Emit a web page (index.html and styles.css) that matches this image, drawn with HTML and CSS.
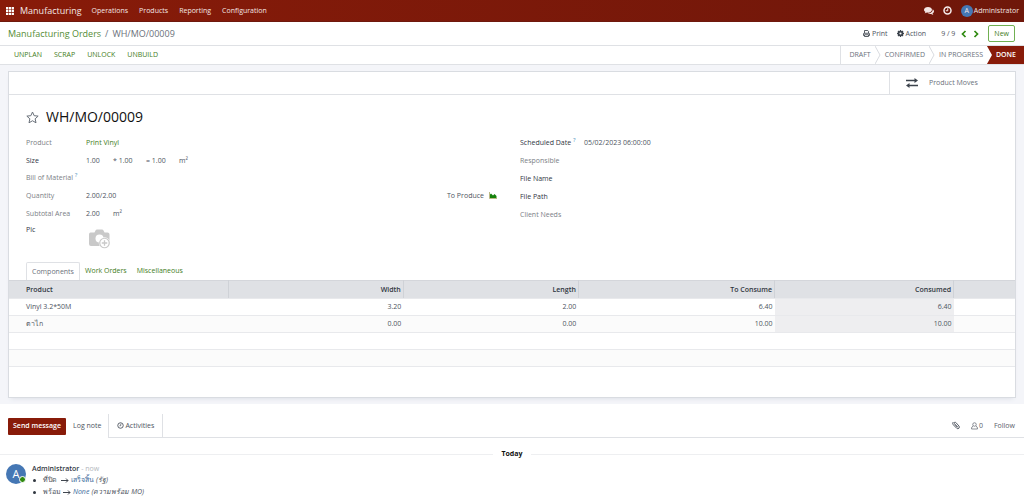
FILE: index.html
```html
<!DOCTYPE html>
<html lang="en">
<head>
<meta charset="utf-8">
<title>Manufacturing Orders / WH/MO/00009</title>
<link rel="stylesheet" href="styles.css">
</head>
<body>
<header class="navbar">
  <button class="apps" aria-label="Apps"><svg width="8" height="8" viewBox="0 0 16 16"><path fill="#fff" d="M0 0h4.500v4.500H0zM5.700 0h4.500v4.500H5.700zM11.400 0h4.500v4.500h-4.500zM0 5.700h4.500v4.500H0zM5.700 5.700h4.500v4.500H5.700zM11.400 5.700h4.500v4.500h-4.500zM0 11.400h4.500v4.500H0zM5.700 11.400h4.500v4.500H5.700zM11.400 11.400h4.500v4.500h-4.500z"/></svg></button>
  <a class="brand" href="#">Manufacturing</a>
  <nav class="menu">
    <a href="#">Operations</a><a href="#">Products</a><a href="#">Reporting</a><a href="#">Configuration</a>
  </nav>
  <div class="systray">
    <button aria-label="Messages"><svg width="10" height="8" viewBox="0 0 20 16"><path fill="#f3e6e4" d="M8 0c4.400 0 8 2.500 8 5.700s-3.600 5.700-8 5.700c-.8 0-1.500-.1-2.200-.2C4.700 12 3 12.600 1.200 12.700c.8-.8 1.500-1.600 1.700-2.600C1.100 9 0 7.500 0 5.700 0 2.500 3.600 0 8 0z"/><path fill="#f3e6e4" d="M17.300 4.300C19 5.300 20 6.800 20 8.400c0 1.800-1.100 3.300-2.900 4.300.2 1 .9 1.900 1.700 2.600-1.800-.1-3.500-.7-4.600-1.500-2.400.5-5 .1-6.900-1 6 .1 10.500-3.400 10-8.500z"/></svg></button>
    <button aria-label="Activities"><svg width="9" height="9" viewBox="0 0 18 18"><circle cx="9" cy="9" r="7" fill="none" stroke="#f8efee" stroke-width="3"/><path d="M9.500 4.500v5h-4" fill="none" stroke="#f8efee" stroke-width="2"/></svg></button>
    <button class="user"><span class="avatar-sm">A</span>Administrator</button>
  </div>
</header>

<div class="control">
  <div class="crumbs"><a href="#">Manufacturing Orders</a><span>/</span><span>WH/MO/00009</span></div>
  <div class="tools">
    <button class="tool"><svg width="7" height="7" viewBox="0 0 14 14"><path d="M3 6V1h6.500L11 2.500V6M1 11V7.500Q1 6.500 2 6.500h10q1 0 1 1V11h-2M3 11H1M3 9.500h8V13H3z" fill="none" stroke="#3c434c" stroke-width="1.700"/></svg>Print</button>
    <button class="tool"><svg width="7" height="7" viewBox="0 0 14 14"><circle cx="7" cy="7" r="3.800" fill="none" stroke="#3c434c" stroke-width="3.200"/><path d="M7 0v2.500M7 11.500V14M0 7h2.500M11.500 7H14M2 2l2 2M10 10l2 2M12 2l-2 2M4 10l-2 2" stroke="#3c434c" stroke-width="2.600"/></svg>Action</button>
    <span class="pager">9 / 9</span>
    <button class="arrow" aria-label="Previous"><svg width="6" height="8" viewBox="0 0 6 8"><path d="M4.500 1L1.500 4l3 3" fill="none" stroke="#2f8a0f" stroke-width="1.700"/></svg></button>
    <button class="arrow" aria-label="Next"><svg width="6" height="8" viewBox="0 0 6 8"><path d="M1.500 1l3 3-3 3" fill="none" stroke="#2f8a0f" stroke-width="1.700"/></svg></button>
    <button class="new">New</button>
  </div>
</div>

<div class="statusbar">
  <div class="actions"><button>UNPLAN</button><button>SCRAP</button><button>UNLOCK</button><button>UNBUILD</button></div>
  <div class="steps">
    <button>DRAFT</button>
    <svg class="chev" width="6" height="18" viewBox="0 0 6 18"><path d="M0 0l5 9-5 9" fill="none" stroke="#d9dce0"/></svg>
    <button>CONFIRMED</button>
    <svg class="chev" width="6" height="18" viewBox="0 0 6 18"><path d="M0 0l5 9-5 9" fill="none" stroke="#d9dce0"/></svg>
    <button>IN PROGRESS</button>
    <button class="done">DONE</button>
  </div>
</div>

<main class="content">
  <section class="sheet">
    <div class="buttonbox">
      <button class="stat"><svg width="12" height="10" viewBox="0 0 12 10"><path d="M0 2.500h9M3 7.500h9" stroke="#3c434c" stroke-width="1.500"/><path fill="#3c434c" d="M8.500 0L12 2.500 8.500 5zM3.500 5L0 7.500 3.500 10z"/></svg><span>Product Moves</span></button>
    </div>
    <div class="title">
      <svg width="13" height="13" viewBox="0 0 26 26"><path d="M13 2l3.300 7.400 8 .8-6 5.400 1.700 8L13 19.500l-7 4.100 1.700-8-6-5.400 8-.8z" fill="none" stroke="#697079" stroke-width="2" stroke-linejoin="round"/></svg>
      <h1>WH/MO/00009</h1>
    </div>
    <div class="fields">
      <dl class="left">
        <div class="row"><dt>Product</dt><dd><a href="#">Print Vinyl</a></dd></div>
        <div class="row"><dt class="strong">Size</dt><dd class="size"><span>1.00</span><span>* 1.00</span><span>= 1.00</span><span>m²</span></dd></div>
        <div class="row"><dt>Bill of Material <sup>?</sup></dt><dd></dd></div>
        <div class="row"><dt>Quantity</dt><dd>2.00/2.00</dd><dd class="produce">To Produce<svg width="8" height="7" viewBox="0 0 16 14"><path d="M1 0v13h15" fill="none" stroke="#a5a35c" stroke-width="1.500"/><path d="M2 12V5l2-2 4 4 3-3 4 4v4z" fill="#16810c"/></svg></dd></div>
        <div class="row tall"><dt>Subtotal Area</dt><dd class="size"><span>2.00</span><span>m²</span></dd></div>
        <div class="row pic"><dt class="strong">Pic</dt><dd><svg width="23" height="21" viewBox="0 0 46 42"><path d="M5 7h8l2-4q1-2 3-2h10q2 0 3 2l2 4h6q4 0 4 4v19q0 4-4 4H6q-4 0-4-4V11q0-4 3-4z" fill="#c9c9c9"/><circle cx="23" cy="19" r="8" fill="#fff"/><circle cx="33" cy="28" r="11.500" fill="#fff"/><circle cx="33" cy="28" r="9.500" fill="none" stroke="#c9c9c9" stroke-width="2.400"/><path d="M33 22.500v11M27.500 28h11" stroke="#c9c9c9" stroke-width="2.600"/></svg></dd></div>
      </dl>
      <dl class="right">
        <div class="row"><dt class="strong">Scheduled Date <sup>?</sup></dt><dd>05/02/2023 06:00:00</dd></div>
        <div class="row"><dt>Responsible</dt><dd></dd></div>
        <div class="row"><dt class="strong">File Name</dt><dd></dd></div>
        <div class="row"><dt class="strong">File Path</dt><dd></dd></div>
        <div class="row"><dt>Client Needs</dt><dd></dd></div>
      </dl>
    </div>
    <div class="tabs"><button class="active">Components</button><button>Work Orders</button><button>Miscellaneous</button></div>
    <table class="lines">
      <colgroup><col class="c1"><col class="c2"><col class="c2"><col class="c3"><col class="c4"><col></colgroup>
      <thead><tr><th>Product</th><th>Width</th><th>Length</th><th>To Consume</th><th>Consumed</th><th></th></tr></thead>
      <tbody>
        <tr><td>Vinyl 3.2*50M</td><td>3.20</td><td>2.00</td><td>6.40</td><td class="used">6.40</td><td></td></tr>
        <tr><td lang="th">ตาไก</td><td>0.00</td><td>0.00</td><td>10.00</td><td class="used">10.00</td><td></td></tr>
        <tr><td colspan="6"></td></tr>
        <tr><td colspan="6"></td></tr>
      </tbody>
    </table>
  </section>
</main>

<section class="chatter">
  <div class="topbar">
    <div class="compose"><button class="send">Send message</button><button class="note">Log note</button></div>
    <button class="activities"><svg width="7" height="7" viewBox="0 0 14 14"><circle cx="7" cy="7" r="5.500" fill="none" stroke="#4d545e" stroke-width="1.800"/><path d="M7.500 3.500v4H5" fill="none" stroke="#4d545e" stroke-width="1.500"/></svg>Activities</button>
    <div class="follow">
      <button aria-label="Attachments"><svg width="8" height="9" viewBox="0 0 16 18"><path d="M12 13L5 5.500Q3.500 4 4.800 2.800T7.600 3l6.300 7q2 2.500 0 4.500t-4.500 0L2.500 7.500Q0 4.500 2.500 2M6 7l4.500 5" fill="none" stroke="#5b616b" stroke-width="2"/></svg></button>
      <button class="followers"><svg width="7" height="8" viewBox="0 0 14 16"><circle cx="7" cy="5" r="3.500" fill="none" stroke="#5b616b" stroke-width="1.400"/><path d="M4 8Q1 9 1 14h12q0-5-3-6" fill="none" stroke="#5b616b" stroke-width="1.400"/></svg>0</button>
      <button>Follow</button>
    </div>
  </div>
  <div class="day"><span>Today</span></div>
  <article class="message">
    <div class="avatar">A<i class="online"></i></div>
    <div class="body">
      <div class="author"><strong>Administrator</strong> <span>- now</span></div>
      <ul>
        <li><span class="old">ที่ปิด</span><svg width="8" height="5" viewBox="0 0 8 5"><path d="M0 2.500h7M5 .5l2 2-2 2" fill="none" stroke="#40464f"/></svg><span class="val">เสร็จสิ้น</span><em>(รัฐ)</em></li>
        <li><span class="old">พร้อม</span><svg width="8" height="5" viewBox="0 0 8 5"><path d="M0 2.500h7M5 .5l2 2-2 2" fill="none" stroke="#40464f"/></svg><em class="val">None</em><em>(ความพร้อม MO)</em></li>
      </ul>
    </div>
  </article>
</section>
</body>
</html>
```

FILE: styles.css
```css
* { box-sizing: border-box; }
body { margin: 0; background: #fff; color: #4d545e; font: 7px/10px "Open Sans", "Noto Sans", sans-serif; overflow: hidden; }
button { border: 0; padding: 0; margin: 0; background: none; font: inherit; color: inherit; white-space: nowrap; }
a { color: #3f7d1c; text-decoration: none; white-space: nowrap; }
svg { display: block; flex: none; }
dl, dd, h1, ul { margin: 0; padding: 0; }

.navbar { display: flex; align-items: center; height: 22px; padding: 0 5px 0 6px; background: linear-gradient(90deg, #881b09, #6f170a); border-bottom: 1px solid #6f190d; color: #f3e6e4; }
.navbar a { color: #f3e6e4; }
.brand { margin-left: 6px; font-size: 9px; }
.menu { display: flex; gap: 11px; margin-left: 10px; }
.systray { display: flex; align-items: center; gap: 9px; margin-left: auto; }
.user { display: flex; align-items: center; gap: 1px; }
.avatar-sm { width: 12px; height: 12px; border-radius: 50%; background: #4577b4; line-height: 12px; text-align: center; }

.control { display: flex; align-items: center; justify-content: space-between; height: 24px; padding: 0 9px 0 8px; border-bottom: 1px solid #dfe1e5; }
.crumbs { display: flex; gap: 4px; font-size: 9px; color: #6b717b; }
.crumbs a { color: #548c35; }
.tools { display: flex; align-items: center; }
.tool { display: flex; align-items: center; gap: 2px; margin-right: 9px; font-weight: 500; }
.pager { margin: 0 6px; }
.arrow { margin-right: 6px; }
.arrow + .new { margin-left: 3px; }
.new { height: 17px; padding: 0 5px; border: 1px solid #71b052; border-radius: 2px; color: #3f7d1c; }

.statusbar { display: flex; justify-content: space-between; height: 19px; border-bottom: 1px solid #dfe1e5; }
.actions { display: flex; gap: 12px; padding-left: 14px; color: #3f7d1c; font-weight: 500; }
.steps { display: flex; border-left: 1px solid #dfe1e5; color: #6b717b; }
.steps button { padding: 0 4px; }
.steps button:first-child { padding-left: 8px; }
.steps .done { padding: 0 8px 0 9px; background: #881b09; color: #fff; font-weight: 600; clip-path: polygon(0 0, 100% 0, 100% 100%, 0 100%, 5px 50%); }

.content { padding: 6px 8px; background: #f4f5f9; }
.sheet { padding-bottom: 30px; background: #fff; border: 1px solid #d9dce1; box-shadow: 0 3px 5px -3px #d6d9e2; }
.buttonbox { display: flex; justify-content: flex-end; height: 23px; border-bottom: 1px solid #dfe1e5; }
.stat { display: flex; align-items: center; gap: 11px; width: 126px; padding-left: 16px; border-left: 1px solid #dfe1e5; color: #6b717b; }
.title { display: flex; align-items: center; gap: 7px; padding: 13px 17px 8px; }
h1 { font-size: 14px; line-height: 18px; font-weight: 400; color: #111; }
.fields { display: flex; padding: 0 17px; }
.left { flex: 0 1 494px; }
.right { flex: 1; }
.row { display: flex; align-items: center; height: 18px; }
.left .row { height: 17px; }
.left .row:first-child, .left .row:nth-child(3) { height: 18px; }
.left .tall { height: 20px; }
dt { width: 60px; flex: none; color: #7b8086; white-space: nowrap; }
.right dt { width: 64px; }
.strong { color: #30363f; font-weight: 500; }
sup { font-size: 6px; line-height: 0; color: #4a91bd; }
.size { display: flex; }
.size span { min-width: 27px; }
.size span:nth-child(2) { min-width: 33px; }
.size span:nth-child(3) { min-width: 33px; }
.produce { display: flex; align-items: center; gap: 5px; margin: 0 23px 0 auto; }
.left .pic { align-items: flex-start; height: 38px; padding-top: 1px; }
.pic dd { padding: 4px 2px; }

.tabs { display: flex; height: 18px; padding-left: 17px; color: #3f7d1c; }
.tabs button { padding: 0 5px; }
.tabs .active { border: 1px solid #dfe1e5; border-bottom: 0; border-radius: 2px 2px 0 0; color: #6b717b; }
.lines { width: 100%; table-layout: fixed; border-collapse: collapse; border-bottom: 1px solid #d9dce1; }
.c1 { width: 21.8%; }
.c2 { width: 17.4%; }
.c3 { width: 19.5%; }
.c4 { width: 17.8%; }
.lines th, .lines td { height: 17px; padding: 0 2px 0 0; text-align: right; border-bottom: 1px solid #e8e9ec; }
.lines th { height: 18px; background: #dfe1e5; border-right: 1px solid #cfd2d7; border-top: 1px solid #d4d6db; color: #30363f; font-weight: 600; }
.lines th:last-child { border-right: 0; }
.lines th:first-child, .lines td:first-child { padding-left: 17px; text-align: left; }
.lines tbody tr:nth-child(even) { background: #fbfbfb; }
.lines .used { background: #eeeef0; }

.chatter { padding-top: 10px; }
.topbar { display: flex; height: 24px; font-weight: 500; }
.compose { display: flex; align-items: center; padding-left: 8px; }
.send { height: 17px; padding: 0 5px; border-radius: 1px; background: #881b09; color: #fff; font-weight: 600; }
.note { padding: 0 7px; }
.activities { display: flex; align-items: center; gap: 1px; padding: 0 8px; border: solid #dfe1e5; border-width: 0 1px 1px; }
.follow { display: flex; flex: 1; align-items: center; justify-content: flex-end; gap: 11px; padding-right: 9px; border-bottom: 1px solid #dfe1e5; color: #5b616b; }
.followers { display: flex; align-items: center; gap: 1px; }
.day { display: flex; align-items: center; gap: 8px; margin-top: 11px; color: #111; font-weight: 700; }
.day::before, .day::after { content: ""; flex: 1; border-top: 1px solid #eeeff1; }
.message { display: flex; gap: 6px; padding: 5px 6px; }
.avatar { position: relative; width: 20px; height: 20px; border-radius: 50%; background: #4577b4; color: #fff; font-size: 11px; line-height: 20px; text-align: center; }
.online { position: absolute; right: 0; bottom: 1px; width: 7px; height: 7px; border: 1px solid #fff; border-radius: 50%; background: #2f8a0f; }
.author { color: #b3b7bd; }
.author strong { color: #30363f; font-weight: 600; }
.message ul { list-style: none; }
.message li { display: flex; align-items: center; gap: 2px; height: 12px; }
.message li::before { content: ""; width: 3px; height: 3px; margin: 0 5px 0 1px; border-radius: 50%; background: #30363f; }
.old { min-width: 16px; }
.val { color: #3a6a9b; }
```
